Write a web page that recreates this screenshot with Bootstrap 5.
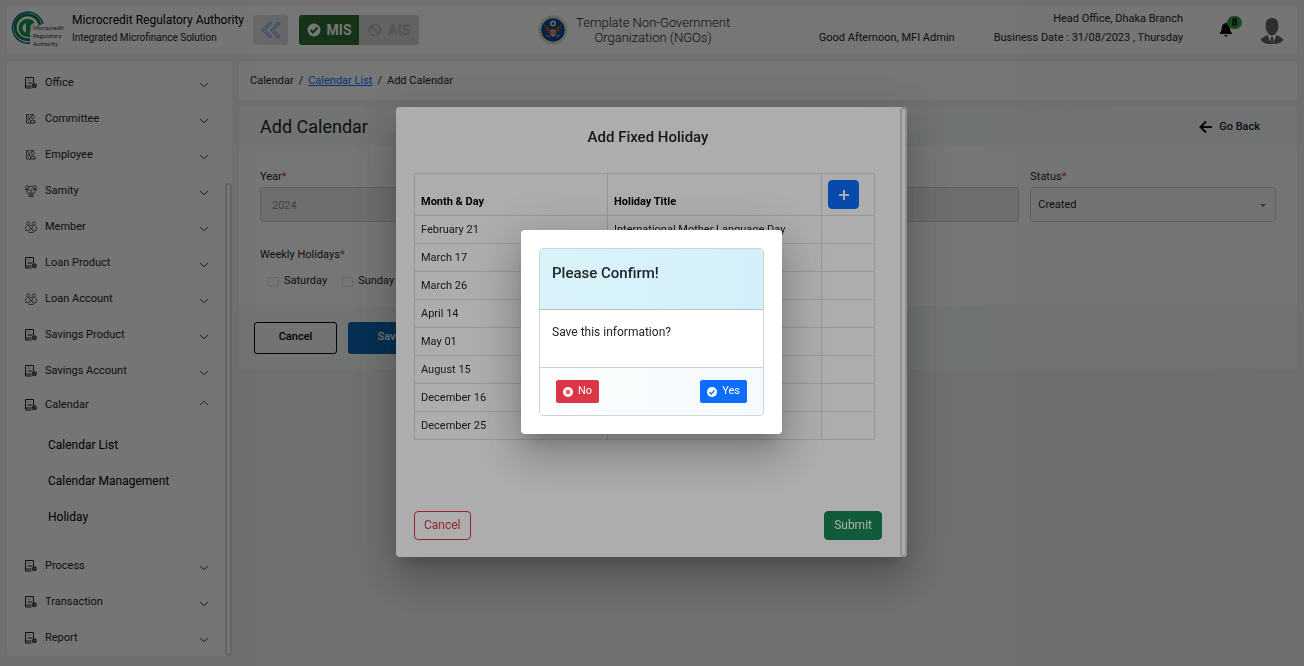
<!DOCTYPE html>
<html lang="en">
<head>
<meta charset="utf-8">
<meta name="viewport" content="width=device-width, initial-scale=1">
<title>Add Calendar - Microcredit Regulatory Authority</title>
<link href="https://cdn.jsdelivr.net/npm/bootstrap@5.3.0/dist/css/bootstrap.min.css" rel="stylesheet">
<style>
  body { font-family: Roboto, "Liberation Sans", sans-serif; font-size: 11px; line-height: 16px; color: #212529; background: #fff; }
  .shell { min-height: 100vh; margin-right: 1px; padding: 6px 7px 10px; background: #f1f1f1; }
  .panel { background: #fff; border-radius: 3px; }

  .topbar { height: 48px; padding: 0 12px 0 4px; }
  .brand-text { margin: 0 9px 0 7px; padding-bottom: 3px; line-height: 17px; }
  .brand-name { font-size: 12px; color: #000; }
  .brand-sub { font-size: 10px; }
  .collapse-btn { width: 35px; height: 30px; padding: 0; border: 0; border-radius: 3px; background: linear-gradient(90deg, #e4e4e4, #dcdcdc); }
  .switcher { height: 30px; margin-left: 11px; border-radius: 3px; overflow: hidden; background: #d3d3d3; }
  .switcher button { width: 60px; border: 0; padding: 0; font-size: 14px; font-weight: 700; background: transparent; color: #b4b4b4; gap: 6px; }
  .switcher .is-on { background: #2e6f30; color: #fff; }
  .org { font-size: 13px; line-height: 15px; font-weight: 300; margin-left: 119px; gap: 8px; }
  .greet { padding-top: 15px; margin-right: 39px; }
  .office { line-height: 19px; padding-bottom: 4px; }
  .bell { width: 24px; height: 24px; margin: 0 17px 0 35px; }
  .bell-count { position: absolute; left: 9px; top: -2px; width: 15px; height: 13px; border-radius: 7px; background: #43a047; color: #000; font-size: 10px; font-weight: 700; line-height: 13px; text-align: center; }

  .work { gap: 7px; margin-top: 7px; }
  .side { position: relative; width: 225px; min-height: 595px; flex: none; padding-top: 4px; }
  .side a { color: #212529; text-decoration: none; }
  .side-item { height: 36px; padding: 0 23px 0 18px; gap: 6px; }
  .side-item svg { flex: none; }
  .side-item .chev { margin-top: 4px; }
  .side-open { height: 32px; }
  .side-open .chev { margin-top: -4px; }
  .side-sub { padding: 6px 0 13px 41px; }
  .side-sub a { display: block; font-size: 12px; line-height: 36px; color: #000; }
  .thumb { border: 2px solid #d9d9d9; border-radius: 4px; position: absolute; }
  .side .thumb { right: 0; top: 122px; bottom: 0; width: 7px; }

  .crumbs { height: 39px; padding: 0 11px; gap: 5px; }
  .crumbs a { color: #0d6efd; }
  .tinted { background: linear-gradient(90deg, #f7f9f9, #f3f9f9 40%, #f4f9fa); }
  .entry { margin-top: 7px; overflow: hidden; }
  .form-head { height: 39px; padding: 0 37px 0 21px; }
  .form-head h1 { font-size: 18px; line-height: 24px; font-weight: 400; }
  .go-back { color: #212529; font-weight: 500; gap: 7px; text-decoration: none; }
  .form-body { padding: 23px 21px 17px; }
  .fields { display: grid; grid-template-columns: repeat(4, 1fr); column-gap: 11px; }
  .fields label { display: block; margin-bottom: 2px; }
  .fields .form-control, .fields .form-select { height: 35px; font-size: 11px; border-radius: 3px; border-color: #d0d0d0; color: #212529; padding: 1px 11px 0; }
  .fields .form-control:disabled { background: #ededed; color: #8f9499; border-color: #ccc; }
  .fields .form-select { padding: 1px 7px 0; background-color: #fbfbfb; background-image: url("data:image/svg+xml,%3csvg xmlns='http://www.w3.org/2000/svg' viewBox='0 0 8 8'%3e%3cpath fill='%23777' d='M1 3h6L4 6z'/%3e%3c/svg%3e"); background-size: 8px 8px; background-position: right 8px center; }
  .req { color: #dc3545; }
  .weekly { margin-top: 25px; }
  .days { gap: 15px; padding-left: 8px; margin-top: 10px; }
  .days .form-check-input { width: 11px; height: 10px; margin: 1px 5px 0 0; border-color: #dedede; border-radius: 2px; }
  .form-foot { height: 63px; padding: 0 15px; gap: 11px; }
  .form-foot .btn { width: 83px; height: 32px; padding: 0; font-size: 11px; font-weight: 500; border-radius: 3px; }
  .btn-plain { border: 1px solid #000; color: #000; }
  .btn-save { background: #0b67b2; color: #fff; }

  .veil { background: rgba(0, 0, 0, .32); width: auto; right: 1px; padding-right: 1px; }
  .sheet { background: #fff; border: 0; border-radius: 4px; padding: 18px; box-shadow: 0 11px 15px -7px rgba(0, 0, 0, .2), 0 24px 38px 3px rgba(0, 0, 0, .14), 0 9px 46px 8px rgba(0, 0, 0, .12); }
  .sheet-holiday { width: 511px; height: 450px; padding: 18px 25px 17px 18px; margin-bottom: 2px; }
  .sheet-holiday .thumb { right: 0; top: 0; bottom: 0; width: 7px; border-color: #d3d3d3; }
  .sheet h2 { font-size: 15px; line-height: 22px; font-weight: 500; margin: 1px 0 25px; }
  .holidays { width: 461px; table-layout: fixed; font-size: 11px; line-height: 15px; margin: 0; }
  .holidays > :not(caption) > * > * { padding: 6px; height: 28px; border-color: #dadce0; color: #212529; }
  .holidays thead th { color: #000; vertical-align: bottom; height: 42px; font-weight: 700; }
  .holidays .c-day { width: 193px; }
  .holidays .c-act { width: 53px; }
  .add-btn { width: 31px; height: 29px; padding: 0; border-radius: 4px; }
  .sheet-btn { font-size: 12px; line-height: 17px; padding: 5px 9px; border-radius: 4px; }

  .sheet-confirm { width: 261px; margin-bottom: 2px; }
  .sheet-confirm .card { border-radius: 4px; border-color: #ced4da; overflow: hidden; }
  .confirm-head { height: 61px; padding: 12px; background: linear-gradient(90deg, #daf3fa, #d3f0fa); border-bottom: 1px solid #b9c5c9; }
  .confirm-head h2 { line-height: 24px; margin: 0; }
  .confirm-body { height: 58px; padding: 14px 12px; font-size: 12px; border-bottom: 1px solid #cbcdcf; }
  .confirm-foot { padding: 12px 16px; background: linear-gradient(90deg, #fbfdfe, #f5fafc); }
  .confirm-foot .btn { height: 23px; padding: 0 6px; font-size: 11px; border-radius: 2px; gap: 5px; }
</style>
</head>
<body>

<svg width="0" height="0" class="position-absolute" aria-hidden="true">
  <defs>
    <symbol id="i-doc" viewBox="0 0 12 12"><path d="M8.500 6V.5h-8v10.500h6M.5 9h6M2.500 6h5" fill="none" stroke="#222" stroke-width="1"/><path d="M2.500 3h3" stroke="#999" stroke-width="1"/><circle cx="9.300" cy="8.800" r="2.500" fill="#444"/><path d="M8.300 8.800l.8.800 1.300-1.500" fill="none" stroke="#fff" stroke-width=".6"/></symbol>
    <symbol id="i-staff" viewBox="0 0 12 12"><path d="M4 1.500H1.500v8.500H6M2.500 3h2M2.500 5h2v2h-2M5 1.500h4" fill="none" stroke="#444" stroke-width=".9"/><circle cx="7.500" cy="4" r="1.600" fill="none" stroke="#444" stroke-width=".9"/><path d="M5.500 10V8q2-2 4.500 0v2z" fill="none" stroke="#333" stroke-width="1"/></symbol>
    <symbol id="i-samity" viewBox="0 0 12 12"><g fill="none" stroke="#444" stroke-width=".8"><circle cx="2.300" cy="2" r="1.500"/><circle cx="9.700" cy="2" r="1.500"/><path d="M.5 5V4h3v1zM8.500 5V4h3v1zM1.500 5.500Q2 9 4.500 9.500M10.500 5.500Q10 9 7.500 9.500M4 2Q6 .5 8 2M4.500 5h3"/><circle cx="6" cy="8" r="1.300"/><path d="M4 11.500V10h4v1.500z"/></g></symbol>
    <symbol id="i-group" viewBox="0 0 12 12"><g fill="none" stroke="#444" stroke-width=".8"><circle cx="3.200" cy="2.500" r="1.600"/><circle cx="8.800" cy="2.500" r="1.600"/><circle cx="6" cy="6" r="1.600"/><path d="M3.500 9.500H.6V6q1-1.800 3-1.500M8.500 9.500h2.900V6q-1-1.800-3-1.500M3.800 11.500V9.500Q4 8 6 8t2.200 1.500v2z"/></g></symbol>
    <symbol id="i-down" viewBox="0 0 10 6"><path d="M1 .8l4 4 4-4" fill="none" stroke="#333" stroke-width="1"/></symbol>
    <symbol id="i-up" viewBox="0 0 10 6"><path d="M1 5.200l4-4 4 4" fill="none" stroke="#333" stroke-width="1"/></symbol>
  </defs>
</svg>

<div class="shell">
  <header class="topbar panel d-flex align-items-center">
    <svg width="54" height="42" viewBox="0 0 54 42" role="img" aria-label="MRA logo">
      <g fill="none">
        <path d="M32 15A15.500 15.500 0 1 0 19 34" stroke="#0a5c9e" stroke-width="1.500"/>
        <path d="M29 16A12.500 12.500 0 1 0 19 30.500" stroke="#00843d" stroke-width="3"/>
        <path d="M22 14.500A7 7 0 1 0 19 25.500" stroke="#0b9a4a" stroke-width="4"/>
        <path d="M20 14h-5v10h4z" fill="#0b9a4a"/>
      </g>
      <g font-family="Lato, sans-serif" font-size="6" fill="#24384f"><text x="22" y="21">Microcredit</text><text x="22" y="29">Regulatory</text><text x="22" y="37">Authority</text></g>
    </svg>
    <div class="brand-text">
      <div class="brand-name">Microcredit Regulatory Authority</div>
      <div class="brand-sub">Integrated Microfinance Solution</div>
    </div>
    <button class="collapse-btn" type="button" aria-label="Collapse menu">
      <svg width="20" height="18" viewBox="0 0 20 18" fill="none" stroke="#4a86e0" stroke-width="1"><path d="M9 1L1 9l8 8 1.500-1.500L4 9l6.500-6.500zM17.500 1l-8 8 8 8 1.500-1.500L12.500 9 19 2.500z"/></svg>
    </button>
    <div class="switcher d-flex">
      <button class="is-on d-flex align-items-center justify-content-center" type="button"><svg width="14" height="14" viewBox="0 0 14 14"><circle cx="7" cy="7" r="6.500" fill="#fff"/><path d="M3.500 7l2.500 2.500 4.500-5" fill="none" stroke="#2e6f30" stroke-width="2"/></svg>MIS</button>
      <button class="d-flex align-items-center justify-content-center" type="button"><svg width="14" height="14" viewBox="0 0 14 14" fill="none" stroke="#b4b4b4" stroke-width="2"><circle cx="7" cy="7" r="5.500"/><path d="M3 3l8 8"/></svg>AIS</button>
    </div>
    <div class="org d-flex align-items-center">
      <svg width="30" height="30" viewBox="0 0 30 30" role="img" aria-label="Organization seal">
        <circle cx="15" cy="15" r="14.300" fill="#fbfaf2" stroke="#e6dfae"/>
        <circle cx="15" cy="15" r="13" fill="none" stroke="#6a7890" stroke-width="1" stroke-dasharray="1 1.500"/>
        <circle cx="15" cy="15" r="11.800" fill="#0a4595"/>
        <path d="M6 9q4 1 7 5l2-1 2 1q3-4 7-5 0 7-6 9l1 3h-8l1-3Q6 16 6 9z" fill="#7a5238"/>
        <circle cx="15" cy="8.500" r="3" fill="#d9dfd8"/><circle cx="15" cy="8.500" r="1.500" fill="#355a90"/>
        <path d="M12.500 15h5v5l-2.500 2-2.500-2z" fill="#e8d0cc"/><path d="M14 16v4M16 16v4" stroke="#b83a3a"/>
        <path d="M8 20l4 2" stroke="#5f9060" stroke-width="1.500"/><path d="M22 20l-4 2" stroke="#c9c9b0"/>
      </svg>
      <div class="text-center">Template Non-Government<br>Organization (NGOs)</div>
    </div>
    <div class="greet ms-auto">Good Afternoon, MFI Admin</div>
    <div class="office text-end">Head Office, Dhaka Branch<br>Business Date : 31/08/2023 , Thursday</div>
    <button class="bell btn p-0 border-0 position-relative" type="button" aria-label="Notifications">
      <svg class="d-block" width="24" height="24" viewBox="0 0 24 24"><path d="M8 4.500q.8 0 .8 1 3 .8 3 4.500 0 3 2 5v1h-12v-1q2-2 2-5 0-3.700 3.200-4.500 0-1 1-1zM6.300 17h3.400q-.3 1.500-1.700 1.500T6.300 17z" fill="#000"/></svg>
      <span class="bell-count">8</span>
    </button>
    <button class="btn p-0 border-0" type="button" aria-label="Profile">
      <svg class="d-block" width="26" height="30" viewBox="0 0 26 30" fill="#606468"><path d="M13 3q6.500 0 6.500 7.500 0 3-1.500 6-2 4-5 4t-5-4q-1.500-3-1.500-6Q6.500 3 13 3zM8.500 20l3.500 9H9q-5-1-7.500-4Q3 22.500 8.500 20zM17.500 20L14 29h3q5-1 7.500-4-1.500-2.500-7-5zM12 22h2l.8 7h-3.600z"/></svg>
    </button>
  </header>

  <div class="work d-flex">
    <nav class="side panel" aria-label="Main menu">
      <a class="side-item d-flex align-items-center" href="#"><svg width="14" height="12"><use href="#i-doc" width="12" height="12"/></svg><span class="flex-grow-1">Office</span><svg class="chev" width="10" height="6"><use href="#i-down"/></svg></a>
      <a class="side-item d-flex align-items-center" href="#"><svg width="14" height="12"><use href="#i-staff" width="12" height="12"/></svg><span class="flex-grow-1">Committee</span><svg class="chev" width="10" height="6"><use href="#i-down"/></svg></a>
      <a class="side-item d-flex align-items-center" href="#"><svg width="14" height="12"><use href="#i-staff" width="12" height="12"/></svg><span class="flex-grow-1">Employee</span><svg class="chev" width="10" height="6"><use href="#i-down"/></svg></a>
      <a class="side-item d-flex align-items-center" href="#"><svg width="14" height="12"><use href="#i-samity" width="12" height="12"/></svg><span class="flex-grow-1">Samity</span><svg class="chev" width="10" height="6"><use href="#i-down"/></svg></a>
      <a class="side-item d-flex align-items-center" href="#"><svg width="14" height="12"><use href="#i-group" width="12" height="12"/></svg><span class="flex-grow-1">Member</span><svg class="chev" width="10" height="6"><use href="#i-down"/></svg></a>
      <a class="side-item d-flex align-items-center" href="#"><svg width="14" height="12"><use href="#i-doc" width="12" height="12"/></svg><span class="flex-grow-1">Loan Product</span><svg class="chev" width="10" height="6"><use href="#i-down"/></svg></a>
      <a class="side-item d-flex align-items-center" href="#"><svg width="14" height="12"><use href="#i-group" width="12" height="12"/></svg><span class="flex-grow-1">Loan Account</span><svg class="chev" width="10" height="6"><use href="#i-down"/></svg></a>
      <a class="side-item d-flex align-items-center" href="#"><svg width="14" height="12"><use href="#i-doc" width="12" height="12"/></svg><span class="flex-grow-1">Savings Product</span><svg class="chev" width="10" height="6"><use href="#i-down"/></svg></a>
      <a class="side-item d-flex align-items-center" href="#"><svg width="14" height="12"><use href="#i-doc" width="12" height="12"/></svg><span class="flex-grow-1">Savings Account</span><svg class="chev" width="10" height="6"><use href="#i-down"/></svg></a>
      <a class="side-item side-open d-flex align-items-center" href="#" aria-expanded="true"><svg width="14" height="12"><use href="#i-doc" width="12" height="12"/></svg><span class="flex-grow-1">Calendar</span><svg class="chev" width="10" height="6"><use href="#i-up"/></svg></a>
      <div class="side-sub">
        <a href="#">Calendar List</a>
        <a href="#">Calendar Management</a>
        <a href="#">Holiday</a>
      </div>
      <a class="side-item d-flex align-items-center" href="#"><svg width="14" height="12"><use href="#i-doc" width="12" height="12"/></svg><span class="flex-grow-1">Process</span><svg class="chev" width="10" height="6"><use href="#i-down"/></svg></a>
      <a class="side-item d-flex align-items-center" href="#"><svg width="14" height="12"><use href="#i-doc" width="12" height="12"/></svg><span class="flex-grow-1">Transaction</span><svg class="chev" width="10" height="6"><use href="#i-down"/></svg></a>
      <a class="side-item d-flex align-items-center" href="#"><svg width="14" height="12"><use href="#i-doc" width="12" height="12"/></svg><span class="flex-grow-1">Report</span><svg class="chev" width="10" height="6"><use href="#i-down"/></svg></a>
      <div class="thumb"></div>
    </nav>

    <main class="flex-grow-1">
      <nav class="crumbs panel d-flex align-items-center" aria-label="breadcrumb">
        <span>Calendar</span><span>/</span><a href="#">Calendar List</a><span>/</span><span>Add Calendar</span>
      </nav>

      <form class="panel entry">
        <div class="form-head tinted d-flex align-items-center justify-content-between">
          <h1 class="m-0">Add Calendar</h1>
          <a class="go-back d-flex align-items-center" href="#"><svg width="13" height="14" viewBox="0 0 13 14" fill="none" stroke="#111" stroke-width="2"><path d="M7 1.500L1.500 7 7 12.500M1.500 7H13"/></svg>Go Back</a>
        </div>
        <div class="form-body">
          <div class="fields">
            <div><label for="year">Year<span class="req">*</span></label><input id="year" class="form-control" value="2024" disabled></div>
            <div></div>
            <div class="d-flex align-items-end"><input class="form-control" aria-label="Calendar name" disabled></div>
            <div><label for="status">Status<span class="req">*</span></label><select id="status" class="form-select"><option>Created</option></select></div>
          </div>
          <fieldset class="weekly">
            <div>Weekly Holidays<span class="req">*</span></div>
            <div class="days d-flex">
              <label class="d-flex align-items-center"><input class="form-check-input" type="checkbox">Saturday</label>
              <label class="d-flex align-items-center"><input class="form-check-input" type="checkbox">Sunday</label>
            </div>
          </fieldset>
        </div>
        <div class="form-foot tinted d-flex align-items-center">
          <button class="btn btn-plain" type="button">Cancel</button>
          <button class="btn btn-save" type="button">Save</button>
        </div>
      </form>
    </main>
  </div>
</div>

<div class="modal veil d-flex align-items-center justify-content-center" role="dialog" aria-label="Add Fixed Holiday">
  <div class="modal-content sheet sheet-holiday">
    <h2 class="text-center">Add Fixed Holiday</h2>
    <table class="table table-bordered holidays">
      <thead><tr><th class="c-day">Month &amp; Day</th><th>Holiday Title</th><th class="c-act"><button class="btn btn-primary add-btn d-flex align-items-center justify-content-center" type="button" aria-label="Add holiday"><svg width="12" height="12" viewBox="0 0 12 12" stroke="#fff" stroke-width="2"><path d="M6 1v10M1 6h10"/></svg></button></th></tr></thead>
      <tbody>
        <tr><td>February 21</td><td>International Mother Language Day</td><td></td></tr>
        <tr><td>March 17</td><td></td><td></td></tr>
        <tr><td>March 26</td><td></td><td></td></tr>
        <tr><td>April 14</td><td></td><td></td></tr>
        <tr><td>May 01</td><td></td><td></td></tr>
        <tr><td>August 15</td><td></td><td></td></tr>
        <tr><td>December 16</td><td></td><td></td></tr>
        <tr><td>December 25</td><td></td><td></td></tr>
      </tbody>
    </table>
    <div class="d-flex justify-content-between mt-auto">
      <button class="btn btn-outline-danger sheet-btn" type="button">Cancel</button>
      <button class="btn btn-success sheet-btn" type="button">Submit</button>
    </div>
    <div class="thumb"></div>
  </div>
</div>

<div class="modal veil d-flex align-items-center justify-content-center" role="dialog" aria-label="Please Confirm!">
  <div class="modal-content sheet sheet-confirm">
    <div class="card">
      <div class="confirm-head"><h2>Please Confirm!</h2></div>
      <div class="confirm-body">Save this information?</div>
      <div class="confirm-foot d-flex justify-content-between">
        <button class="btn btn-danger d-flex align-items-center" type="button"><svg width="10" height="10" viewBox="0 0 10 10"><circle cx="5" cy="5" r="5" fill="#fff"/><path d="M3.200 3.200l3.600 3.600M6.800 3.200L3.200 6.800" stroke="#dc3545" stroke-width="1.500"/></svg>No</button>
        <button class="btn btn-primary d-flex align-items-center" type="button"><svg width="10" height="10" viewBox="0 0 10 10"><circle cx="5" cy="5" r="5" fill="#fff"/><path d="M2.500 5.200L4.300 7l3.200-3.600" fill="none" stroke="#0d6efd" stroke-width="1.400"/></svg>Yes</button>
      </div>
    </div>
  </div>
</div>

<script src="https://cdn.jsdelivr.net/npm/bootstrap@5.3.0/dist/js/bootstrap.bundle.min.js"></script>
</body>
</html>
